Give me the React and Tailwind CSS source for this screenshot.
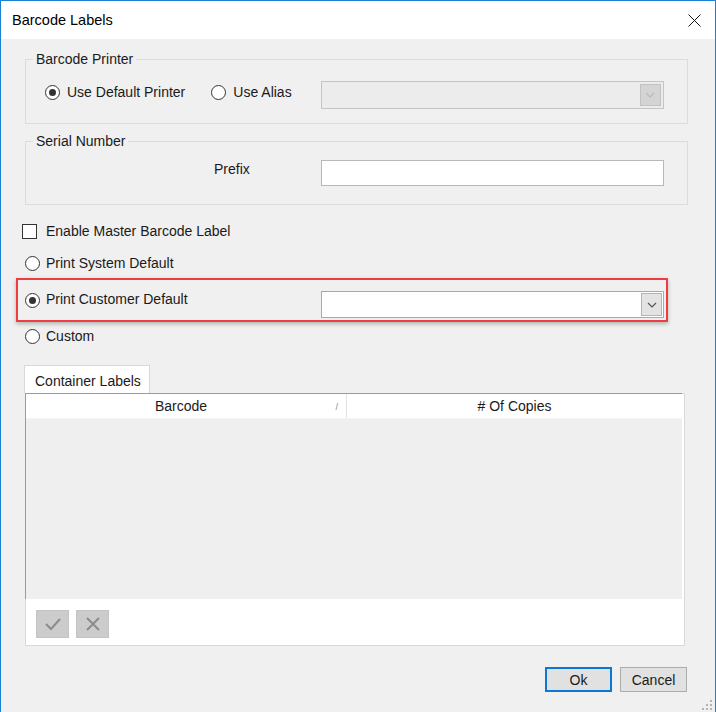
import React from "react";

const Radio = ({ checked }) => (
  <span className="w-[15px] h-[15px] rounded-full border border-[#333333] bg-white flex items-center justify-center shrink-0">
    {checked && <span className="w-[7px] h-[7px] rounded-full bg-[#333333]" />}
  </span>
);

const Chevron = ({ color }) => (
  <svg width="10" height="6" viewBox="0 0 10 6">
    <path d="M1 1 L5 5 L9 1" fill="none" stroke={color} strokeWidth="1.2" />
  </svg>
);

const Combo = ({ disabled }) =>
  disabled ? (
    <div className="w-[343px] h-[28px] border border-[#c4c4c4] bg-[#ececec] flex items-center justify-end pr-[2px]">
      <div className="w-[21px] h-[22px] bg-[#d4d4d4] border border-[#c2c2c2] flex items-center justify-center">
        <Chevron color="#b9b9b9" />
      </div>
    </div>
  ) : (
    <div className="w-[343px] h-[27px] border border-[#a9a9a9] bg-white flex items-center justify-end pr-[1px]">
      <div className="w-[21px] h-[23px] bg-[#e3e3e3] border border-[#b4b4b4] flex items-center justify-center">
        <Chevron color="#555555" />
      </div>
    </div>
  );

export default function App() {
  return (
    <div className="relative w-[716px] h-[712px] border-x border-t border-[#1a80d6] bg-[#f0f0f0] flex flex-col overflow-hidden font-['Liberation_Sans',Arial,sans-serif] text-[14px] leading-[16px] text-[#1a1a1a]">
      {/* title bar */}
      <div className="h-[38px] shrink-0 bg-white flex items-center justify-between pl-[11px] pr-[14px]">
        <span className="text-[14.5px] text-black">Barcode Labels</span>
        <svg width="13" height="13" viewBox="0 0 13 13">
          <path d="M0.5 0.5 L12.5 12.5 M12.5 0.5 L0.5 12.5" stroke="#111" strokeWidth="1" />
        </svg>
      </div>

      <div className="flex flex-col pl-[24px]">
        {/* Barcode Printer */}
        <fieldset className="mt-[12px] w-[663px] h-[73px] border border-[#dcdcdc]">
          <legend className="ml-[7px] px-[3px] leading-[16px]">Barcode Printer</legend>
          <div className="mt-[14px] h-[28px] flex items-center pl-[19px]">
            <span className="-mt-[5px]"><Radio checked /></span>
            <span className="ml-[7px] -mt-[6px]">Use Default Printer</span>
            <span className="ml-[26px] -mt-[5px]"><Radio /></span>
            <span className="ml-[7px] -mt-[6px]">Use Alias</span>
            <div className="ml-[29px]">
              <Combo disabled />
            </div>
          </div>
        </fieldset>

        {/* Serial Number */}
        <fieldset className="mt-[9px] w-[663px] h-[72px] border border-[#dcdcdc]">
          <legend className="ml-[7px] px-[3px] leading-[16px]">Serial Number</legend>
          <div className="mt-[11px] h-[26px] flex items-start pl-[188px]">
            <span className="mt-[1px]">Prefix</span>
            <div className="ml-[71px] w-[343px] h-[26px] border border-[#b8b8b8] bg-white" />
          </div>
        </fieldset>

        {/* checkbox */}
        <div className="mt-[18px] h-[16px] flex items-center -ml-[3px]">
          <span className="w-[15px] h-[15px] border border-[#333333] bg-white shrink-0" />
          <span className="ml-[9px]">Enable Master Barcode Label</span>
        </div>

        <div className="mt-[16px] h-[16px] flex items-center">
          <Radio />
          <span className="ml-[6px]">Print System Default</span>
        </div>

        <div className="mt-[7px] -ml-[9px] w-[652px] h-[44px] border-2 border-[#ee3d40] shadow-[0_2px_4px_rgba(0,0,0,0.25)] flex items-start pt-[11px] pl-[7px] pr-[2px]">
          <div className="h-[16px] flex items-center mt-[1px]">
            <Radio checked />
            <span className="ml-[6px] -mt-[2px]">Print Customer Default</span>
          </div>
          <div className="ml-auto">
            <Combo />
          </div>
        </div>

        <div className="mt-[6px] h-[16px] flex items-center">
          <Radio />
          <span className="ml-[6px]">Custom</span>
        </div>

        {/* tab */}
        <div className="mt-[21px] -ml-[1px] w-[126px] h-[28px] border-x border-t border-[#d9d9d9] bg-white flex items-center pl-[10px]">
          <span className="mt-[2px]">Container Labels</span>
        </div>
        <div className="w-[660px] h-[253px] border border-[#d9d9d9] bg-white flex flex-col">
          <div className="-ml-[1px] -mt-[1px] w-[657px] h-[206px] border-l border-t border-[#9b9b9b] flex flex-col">
            <div className="h-[25px] bg-white flex border-b border-[#f4f4f4]">
              <div className="relative w-[321px] border-r border-[#e2e2e2] flex items-center justify-center pr-[10px]">
                <span>Barcode</span>
                <span className="absolute right-[8px] top-[5px] text-[9px] text-[#888]">/</span>
              </div>
              <div className="flex-1 flex items-center justify-center">
                <span># Of Copies</span>
              </div>
            </div>
            <div className="flex-1 bg-[#efefef]" />
          </div>
          <div className="flex gap-[7px] pl-[10px] pt-[11px]">
            <div className="w-[33px] h-[28px] bg-[#cccccc] border border-[#c4c4c4] flex items-center justify-center">
              <svg width="18" height="14" viewBox="0 0 18 14">
                <path d="M2 7 L7 12 L16 2" fill="none" stroke="#8c8c8c" strokeWidth="2" />
              </svg>
            </div>
            <div className="w-[33px] h-[28px] bg-[#cccccc] border border-[#c4c4c4] flex items-center justify-center">
              <svg width="16" height="16" viewBox="0 0 16 16">
                <path d="M2 2 L14 14 M14 2 L2 14" stroke="#8c8c8c" strokeWidth="2" />
              </svg>
            </div>
          </div>
        </div>

        {/* dialog buttons */}
        <div className="mt-[21px] w-[662px] flex justify-end gap-[8px]">
          <button className="w-[67px] h-[25px] bg-[#e1e1e1] border-2 border-[#0a78d7] flex items-center justify-center">
            Ok
          </button>
          <button className="w-[67px] h-[25px] bg-[#e1e1e1] border border-[#adadad] flex items-center justify-center">
            Cancel
          </button>
        </div>
      </div>

      {/* size grip */}
      <svg className="absolute right-[2px] bottom-[1px]" width="12" height="12" viewBox="0 0 12 12">
        <rect x="9" y="1" width="2" height="2" fill="#b4b4b4" />
        <rect x="5" y="5" width="2" height="2" fill="#b4b4b4" />
        <rect x="9" y="5" width="2" height="2" fill="#b4b4b4" />
        <rect x="1" y="9" width="2" height="2" fill="#b4b4b4" />
        <rect x="5" y="9" width="2" height="2" fill="#b4b4b4" />
        <rect x="9" y="9" width="2" height="2" fill="#b4b4b4" />
      </svg>
    </div>
  );
}
